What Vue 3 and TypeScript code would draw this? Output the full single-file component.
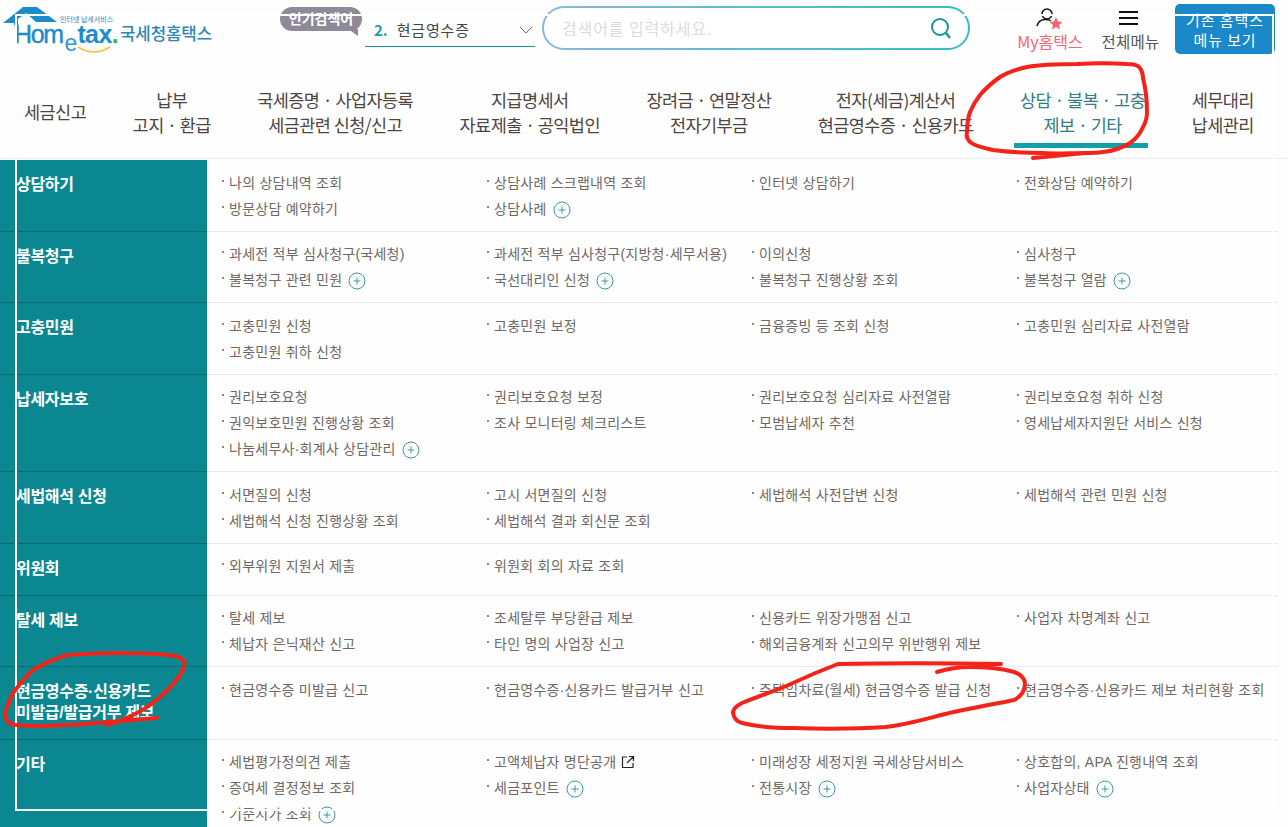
<template>
  <div class="page">
    <header class="top">
      <a class="logo">
        <svg class="logo-house" width="60" height="30" viewBox="0 0 60 30">
          <path d="M3 23 L23 7 L37 7 L57 22 L36 22 L26 13 L18 19 L18 25 L14 25 L14 23 Z" fill="#1c8ccd" />
        </svg>
        <span class="logo-sub">인터넷 납세서비스</span>
        <span class="logo-word"><span class="hom">Hom</span><i>e</i><span class="tax">tax</span><b>.</b></span>
        <svg class="logo-smile" width="36" height="8" viewBox="0 0 36 8">
          <path d="M2 1 Q18 11 34 1" fill="none" stroke="#f2c443" stroke-width="1.6" />
        </svg>
      </a>
      <span class="brand">국세청홈택스</span>
      <div class="hot">인기검색어</div>
      <div class="select">
        <span><b>2.</b>현금영수증</span>
        <svg width="14" height="8" viewBox="0 0 14 8"><path d="M1 1 L7 7 L13 1" fill="none" stroke="#666" /></svg>
      </div>
      <div class="search">
        <span>검색어를 입력하세요.</span>
        <svg width="24" height="24" viewBox="0 0 24 24">
          <circle cx="11" cy="11" r="8" fill="none" stroke="#17949b" stroke-width="2" />
          <path d="M17 17 L21 22" stroke="#17949b" stroke-width="2.4" />
        </svg>
      </div>
      <div class="my">
        <svg width="28" height="23" viewBox="0 0 28 23">
          <circle cx="12" cy="7" r="5" fill="none" stroke="#111" stroke-width="1.5" />
          <path d="M2 19 Q4 12 11 12.5 Q14 12.5 16 14" fill="none" stroke="#111" stroke-width="1.5" />
          <path d="M21 10 L23 14.5 L27.5 15 L24 18 L25 22.5 L21 20 L17 22.5 L18 18 L14.5 15 L19 14.5 Z" fill="#f3647a" />
        </svg>
        <span>My홈택스</span>
      </div>
      <div class="all">
        <i /><i /><i />
        <span>전체메뉴</span>
      </div>
      <button type="button" class="old-menu">기존 홈택스<br />메뉴 보기</button>
    </header>

    <nav class="gnb">
      <a v-for="m in menus" :key="m.join()" :class="{ on: m[0].startsWith('상담') }">
        <span v-for="l in m" :key="l">{{ l }}</span>
      </a>
    </nav>

    <section class="table">
      <div v-for="r in rows" :key="r.title" class="row">
        <h3 v-html="r.title" />
        <ul>
          <li v-for="it in r.items" :key="it">
            {{ clean(it) }}
            <svg v-if="it.endsWith('+')" class="plus" width="18" height="18" viewBox="0 0 18 18">
              <circle cx="9" cy="9" r="8" fill="none" stroke="#3d9a9f" />
              <path d="M5.5 9 H12.5 M9 5.5 V12.5" stroke="#3d9a9f" />
            </svg>
            <svg v-if="it.endsWith('^')" class="ext" width="14" height="14" viewBox="0 0 14 14">
              <path d="M6 2 H1.5 V12.5 H12 V8 M8 1.5 H12.5 V6 M12.5 1.5 L6 8" fill="none" stroke="#222" stroke-width="1.2" />
            </svg>
          </li>
        </ul>
      </div>
    </section>

    <div class="guide" />

    <svg class="marks" width="1288" height="827" viewBox="0 0 1288 827">
      <path d="M1033 158 L1085 153 C1070 153 1055 154 1043 153 C1025 153 1008 152 993 150 C983 148 975 146 970 142 C967 139 966 136 967 132 C967 124 968 118 970 112 C973 105 976 100 980 95 C986 88 993 82 1000 77 C1008 72 1018 69 1027 67 C1043 64 1060 64 1077 64 C1094 63 1112 63 1127 64 C1133 64 1138 65 1140 68 C1142 71 1143 74 1143 78 C1146 90 1147 101 1147 112 C1147 118 1146 122 1143 127 C1140 134 1136 139 1130 143 C1122 148 1113 151 1103 152 C1097 153 1091 153 1085 153" />
      <path d="M107 725 C118 722 124 719 133 715 C144 710 152 704 160 697 C170 688 178 680 183 670 C185 665 185 660 183 660 C178 656 172 655 167 655 C150 653 134 653 117 653 C98 653 82 654 67 655 C54 659 43 664 33 670 C25 677 19 685 13 693 C9 701 5 710 5 717 C7 723 12 725 17 725 C35 727 50 726 67 725 C82 725 95 723 107 722 C125 721 140 719 157 718" />
      <path d="M1001 664 C940 663 890 663 838 664 C822 670 808 676 793 683 C776 691 758 696 742 703 C736 706 733 709 733 713 C734 719 738 722 742 723 C758 727 775 728 793 728 C825 729 855 729 885 727 C905 725 922 720 941 715 C965 709 990 705 1014 700 C1022 696 1025 690 1025 683 C1024 677 1020 674 1014 672 C1000 668 985 667 970 667 C958 667 947 669 937 672" />
    </svg>
  </div>
</template>

<script setup lang="ts">
const menus: string[][] = [
  ['세금신고'],
  ['납부', '고지 · 환급'],
  ['국세증명 · 사업자등록', '세금관련 신청/신고'],
  ['지급명세서', '자료제출 · 공익법인'],
  ['장려금 · 연말정산', '전자기부금'],
  ['전자(세금)계산서', '현금영수증 · 신용카드'],
  ['상담 · 불복 · 고충', '제보 · 기타'],
  ['세무대리', '납세관리'],
]

// 끝에 + 는 더보기 아이콘, ^ 는 새창 아이콘
const rows: { title: string; items: string[] }[] = [
  { title: '상담하기', items: ['나의 상담내역 조회', '상담사례 스크랩내역 조회', '인터넷 상담하기', '전화상담 예약하기', '방문상담 예약하기', '상담사례+'] },
  { title: '불복청구', items: ['과세전 적부 심사청구(국세청)', '과세전 적부 심사청구(지방청·세무서용)', '이의신청', '심사청구', '불복청구 관련 민원+', '국선대리인 신청+', '불복청구 진행상황 조회', '불복청구 열람+'] },
  { title: '고충민원', items: ['고충민원 신청', '고충민원 보정', '금융증빙 등 조회 신청', '고충민원 심리자료 사전열람', '고충민원 취하 신청'] },
  { title: '납세자보호', items: ['권리보호요청', '권리보호요청 보정', '권리보호요청 심리자료 사전열람', '권리보호요청 취하 신청', '권익보호민원 진행상황 조회', '조사 모니터링 체크리스트', '모범납세자 추천', '영세납세자지원단 서비스 신청', '나눔세무사·회계사 상담관리+'] },
  { title: '세법해석 신청', items: ['서면질의 신청', '고시 서면질의 신청', '세법해석 사전답변 신청', '세법해석 관련 민원 신청', '세법해석 신청 진행상황 조회', '세법해석 결과 회신문 조회'] },
  { title: '위원회', items: ['외부위원 지원서 제출', '위원회 회의 자료 조회'] },
  { title: '탈세 제보', items: ['탈세 제보', '조세탈루 부당환급 제보', '신용카드 위장가맹점 신고', '사업자 차명계좌 신고', '체납자 은닉재산 신고', '타인 명의 사업장 신고', '해외금융계좌 신고의무 위반행위 제보'] },
  { title: '현금영수증·신용카드<br>미발급/발급거부 제보', items: ['현금영수증 미발급 신고', '현금영수증·신용카드 발급거부 신고', '주택임차료(월세) 현금영수증 발급 신청', '현금영수증·신용카드 제보 처리현황 조회'] },
  { title: '기타', items: ['세법평가정의견 제출', '고액체납자 명단공개^', '미래성장 세정지원 국세상담서비스', '상호합의, APA 진행내역 조회', '증여세 결정정보 조회', '세금포인트+', '전통시장+', '사업자상태+', '기준시가 조회+'] },
]

const clean = (s: string) => s.replace(/[+^]$/, '')
</script>

<style>
html, body { overflow: hidden; background: #fefefe; }
</style>

<style scoped>
.page { position: relative; width: 1288px; height: 827px; overflow: hidden; font-family: "Noto Sans CJK KR", "Noto Sans", sans-serif; color: #6f6864; }

.top { display: flex; align-items: flex-start; height: 60px; }
.logo { position: relative; display: block; width: 117px; height: 60px; flex: none; }
.logo-house { position: absolute; left: 0; top: 0; }
.logo-sub { position: absolute; left: 60px; top: 15px; font-size: 7px; line-height: 8px; color: #3a80b0; white-space: nowrap; }
.logo-word { position: absolute; left: 14px; top: 24.5px; font-family: "Liberation Sans", sans-serif; font-size: 25px; line-height: 18px; color: #1c8ccd; font-weight: 700; white-space: nowrap; }
.hom { font-weight: 400; letter-spacing: -1.4px; -webkit-text-stroke: .4px #1c8ccd; }
.tax { letter-spacing: -.6px; }
.logo-word i { font-style: normal; font-size: 23px; position: relative; top: 8px; left: 2px; margin-right: 2px; font-weight: 400; color: #2a97d6; }
.logo-word b { color: #35b254; }
.logo-smile { position: absolute; left: 76px; top: 46px; }
.brand { width: 160px; flex: none; margin-top: 21px; margin-left: 3px; font-size: 16.8px; line-height: 24px; color: #2f87b4; font-weight: 500; letter-spacing: -.1px; }
.hot { position: relative; flex: none; width: 82px; height: 24px; margin-top: 7px; border-radius: 12px; background: #8f8a99; color: #fff; font-size: 14px; font-weight: 700; line-height: 23px; text-align: center; white-space: nowrap; }
.hot::after { content: ""; position: absolute; right: 4px; bottom: -5px; border-top: 7px solid #8f8a99; border-left: 10px solid transparent; }
.select { flex: none; width: 170px; height: 32px; margin: 15px 0 0 3px; border-bottom: 1px solid #17949b; display: flex; align-items: center; justify-content: space-between; padding: 0 2px 2px 9px; box-sizing: border-box; font-size: 15px; letter-spacing: .8px; color: #444; }
.select b { color: #1e9ba3; margin-right: 9px; font-size: 15px; letter-spacing: 0; }
.search { flex: none; width: 428px; height: 44px; margin: 6px 0 0 7px; box-sizing: border-box; border: 2px solid transparent; border-radius: 22px; background: linear-gradient(#fff, #fff) padding-box, linear-gradient(90deg, #8ab6dd, #37bdc4) border-box; display: flex; align-items: center; justify-content: space-between; padding: 0 15px 0 18px; font-size: 16px; color: #dcdcdc; letter-spacing: .9px; }
.my { flex: none; width: 66px; margin: 6px 0 0 47px; display: flex; flex-direction: column; align-items: center; font-size: 16px; line-height: 22px; color: #f0667b; white-space: nowrap; }
.my svg { margin-right: 2px; margin-top: 1px; }
.all { flex: none; width: 59px; margin: 0 0 0 18px; padding-top: 11px; display: flex; flex-direction: column; align-items: center; font-size: 15.5px; letter-spacing: .2px; color: #555; white-space: nowrap; }
.all i { display: block; width: 19px; height: 2px; margin-bottom: 4px; margin-right: 5px; background: #111; }
.all span { margin-top: 1px; line-height: 22px; }
.old-menu { flex: none; width: 100px; height: 50px; margin: 4px 0 0 15px; padding: 1px 0 0; border: 0; border-radius: 5px; background: #1a88c9; color: #fff; font: 15px/20px "Noto Sans CJK KR", sans-serif; letter-spacing: .9px; white-space: nowrap; }

.gnb { display: flex; gap: 46.4px; align-items: center; height: 99px; padding-left: 24px; box-sizing: border-box; border-bottom: 1px solid #e8eef0; font-size: 17.5px; line-height: 25px; letter-spacing: -.55px; color: #4e4541; }
.gnb a { position: relative; display: flex; flex-direction: column; align-items: center; white-space: nowrap; margin-top: 5px; }
.gnb a.on { color: #2f7f83; }
.gnb a.on::after { content: ""; position: absolute; left: -6px; right: -3px; top: 56px; height: 5px; background: #12a0a6; }

.table { margin-top: 1px; width: 1278px; }
.row { display: flex; border-bottom: 1px solid #ece9e6; box-sizing: border-box; }
.row h3 { flex: none; width: 207px; box-sizing: border-box; margin: 0; padding: 14px 0 15.6px 16px; background: #0a8791; border-bottom: 1px solid #0a6d75; margin-bottom: -1px; color: #fff; font-family: "Liberation Sans", "Noto Sans CJK KR", sans-serif; font-size: 16px; line-height: 21px; font-weight: 700; letter-spacing: -.3px; white-space: nowrap; }
.row ul { flex: 1; display: grid; grid-template-columns: repeat(4, 265px); grid-auto-rows: 26px; margin: 0; padding: 9.5px 0 9.1px 15px; list-style: none; font-family: "Liberation Sans", "Noto Sans CJK KR", sans-serif; font-size: 14px; line-height: 26px; letter-spacing: .25px; }
.row li { position: relative; padding-left: 7px; white-space: nowrap; }
.row li::before { content: ""; position: absolute; left: 0; top: 10px; width: 2px; height: 2px; background: #888; }
.plus { vertical-align: -5px; margin-left: 2px; }
.ext { vertical-align: -2px; margin-left: 1px; }

.guide { position: absolute; left: 15px; top: 14px; width: 1259px; height: 797px; border: 2px solid #fff; box-sizing: border-box; pointer-events: none; }
.marks { position: absolute; left: 0; top: 0; pointer-events: none; }
.marks path { fill: none; stroke: #f4231a; stroke-width: 4; stroke-linecap: round; stroke-linejoin: round; }
</style>
